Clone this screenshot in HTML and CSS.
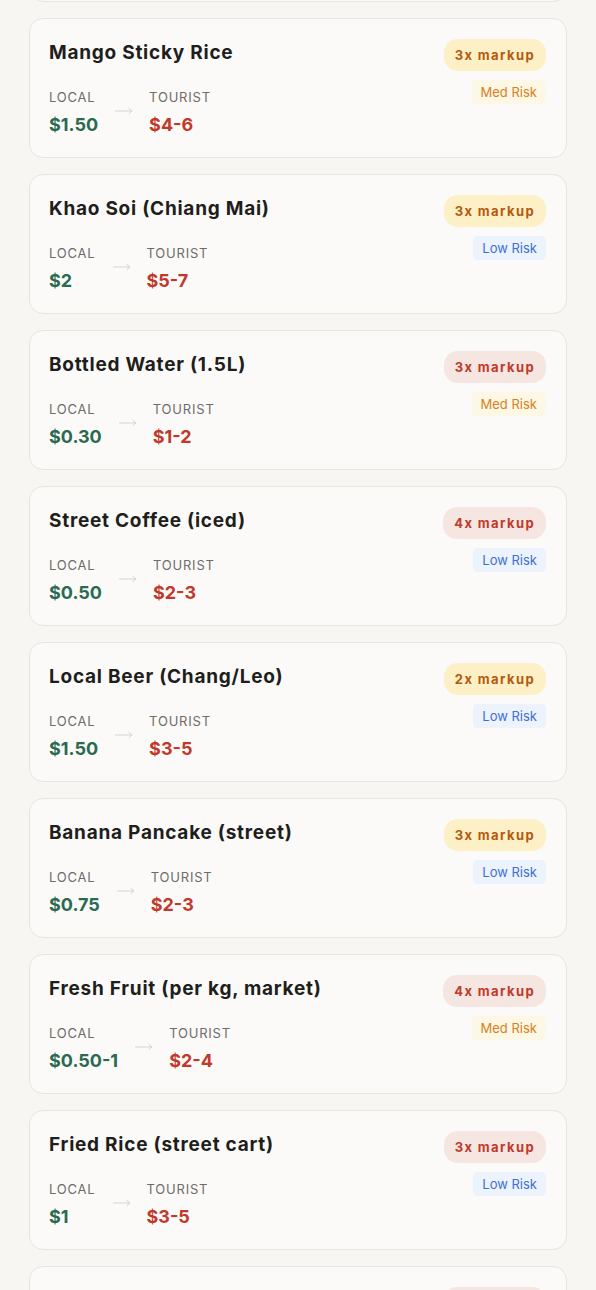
FILE: index.html
```html
<!DOCTYPE html>
<html lang="en">
<head>
    <meta charset="UTF-8">
    <meta name="viewport" content="width=device-width, initial-scale=1.0">
    <title>Thailand Price Check</title>
    <link rel="stylesheet" href="styles.css">
</head>
<body>

    <div class="price-list">

        <!-- card scrolled past, only its bottom edge shows -->
        <div class="item-card item-card--scrolled"></div>

        <div class="item-card">
            <div class="item-main">
                <h2 class="item-name">Mango Sticky Rice</h2>
                <div class="price-row">
                    <div class="price-col">
                        <span class="price-label">LOCAL</span>
                        <span class="price local">$1.50</span>
                    </div>
                    <svg class="arrow" width="18" height="8" viewBox="0 0 18 8"><path d="M0 4H17M13.5 1L17 4L13.5 7" fill="none" stroke="currentColor" stroke-width="1"/></svg>
                    <div class="price-col">
                        <span class="price-label">TOURIST</span>
                        <span class="price tourist">$4-6</span>
                    </div>
                </div>
            </div>
            <div class="item-tags">
                <span class="markup markup--warn">3x markup</span>
                <span class="risk risk--med">Med Risk</span>
            </div>
        </div>

        <div class="item-card">
            <div class="item-main">
                <h2 class="item-name">Khao Soi (Chiang Mai)</h2>
                <div class="price-row">
                    <div class="price-col">
                        <span class="price-label">LOCAL</span>
                        <span class="price local">$2</span>
                    </div>
                    <svg class="arrow" width="18" height="8" viewBox="0 0 18 8"><path d="M0 4H17M13.5 1L17 4L13.5 7" fill="none" stroke="currentColor" stroke-width="1"/></svg>
                    <div class="price-col">
                        <span class="price-label">TOURIST</span>
                        <span class="price tourist">$5-7</span>
                    </div>
                </div>
            </div>
            <div class="item-tags">
                <span class="markup markup--warn">3x markup</span>
                <span class="risk risk--low">Low Risk</span>
            </div>
        </div>

        <div class="item-card">
            <div class="item-main">
                <h2 class="item-name">Bottled Water (1.5L)</h2>
                <div class="price-row">
                    <div class="price-col">
                        <span class="price-label">LOCAL</span>
                        <span class="price local">$0.30</span>
                    </div>
                    <svg class="arrow" width="18" height="8" viewBox="0 0 18 8"><path d="M0 4H17M13.5 1L17 4L13.5 7" fill="none" stroke="currentColor" stroke-width="1"/></svg>
                    <div class="price-col">
                        <span class="price-label">TOURIST</span>
                        <span class="price tourist">$1-2</span>
                    </div>
                </div>
            </div>
            <div class="item-tags">
                <span class="markup markup--high">3x markup</span>
                <span class="risk risk--med">Med Risk</span>
            </div>
        </div>

        <div class="item-card">
            <div class="item-main">
                <h2 class="item-name">Street Coffee (iced)</h2>
                <div class="price-row">
                    <div class="price-col">
                        <span class="price-label">LOCAL</span>
                        <span class="price local">$0.50</span>
                    </div>
                    <svg class="arrow" width="18" height="8" viewBox="0 0 18 8"><path d="M0 4H17M13.5 1L17 4L13.5 7" fill="none" stroke="currentColor" stroke-width="1"/></svg>
                    <div class="price-col">
                        <span class="price-label">TOURIST</span>
                        <span class="price tourist">$2-3</span>
                    </div>
                </div>
            </div>
            <div class="item-tags">
                <span class="markup markup--high">4x markup</span>
                <span class="risk risk--low">Low Risk</span>
            </div>
        </div>

        <div class="item-card">
            <div class="item-main">
                <h2 class="item-name">Local Beer (Chang/Leo)</h2>
                <div class="price-row">
                    <div class="price-col">
                        <span class="price-label">LOCAL</span>
                        <span class="price local">$1.50</span>
                    </div>
                    <svg class="arrow" width="18" height="8" viewBox="0 0 18 8"><path d="M0 4H17M13.5 1L17 4L13.5 7" fill="none" stroke="currentColor" stroke-width="1"/></svg>
                    <div class="price-col">
                        <span class="price-label">TOURIST</span>
                        <span class="price tourist">$3-5</span>
                    </div>
                </div>
            </div>
            <div class="item-tags">
                <span class="markup markup--warn">2x markup</span>
                <span class="risk risk--low">Low Risk</span>
            </div>
        </div>

        <div class="item-card">
            <div class="item-main">
                <h2 class="item-name">Banana Pancake (street)</h2>
                <div class="price-row">
                    <div class="price-col">
                        <span class="price-label">LOCAL</span>
                        <span class="price local">$0.75</span>
                    </div>
                    <svg class="arrow" width="18" height="8" viewBox="0 0 18 8"><path d="M0 4H17M13.5 1L17 4L13.5 7" fill="none" stroke="currentColor" stroke-width="1"/></svg>
                    <div class="price-col">
                        <span class="price-label">TOURIST</span>
                        <span class="price tourist">$2-3</span>
                    </div>
                </div>
            </div>
            <div class="item-tags">
                <span class="markup markup--warn">3x markup</span>
                <span class="risk risk--low">Low Risk</span>
            </div>
        </div>

        <div class="item-card">
            <div class="item-main">
                <h2 class="item-name">Fresh Fruit (per kg, market)</h2>
                <div class="price-row">
                    <div class="price-col">
                        <span class="price-label">LOCAL</span>
                        <span class="price local">$0.50-1</span>
                    </div>
                    <svg class="arrow" width="18" height="8" viewBox="0 0 18 8"><path d="M0 4H17M13.5 1L17 4L13.5 7" fill="none" stroke="currentColor" stroke-width="1"/></svg>
                    <div class="price-col">
                        <span class="price-label">TOURIST</span>
                        <span class="price tourist">$2-4</span>
                    </div>
                </div>
            </div>
            <div class="item-tags">
                <span class="markup markup--high">4x markup</span>
                <span class="risk risk--med">Med Risk</span>
            </div>
        </div>

        <div class="item-card">
            <div class="item-main">
                <h2 class="item-name">Fried Rice (street cart)</h2>
                <div class="price-row">
                    <div class="price-col">
                        <span class="price-label">LOCAL</span>
                        <span class="price local">$1</span>
                    </div>
                    <svg class="arrow" width="18" height="8" viewBox="0 0 18 8"><path d="M0 4H17M13.5 1L17 4L13.5 7" fill="none" stroke="currentColor" stroke-width="1"/></svg>
                    <div class="price-col">
                        <span class="price-label">TOURIST</span>
                        <span class="price tourist">$3-5</span>
                    </div>
                </div>
            </div>
            <div class="item-tags">
                <span class="markup markup--high">3x markup</span>
                <span class="risk risk--low">Low Risk</span>
            </div>
        </div>

        <!-- next card, only its top edge shows -->
        <div class="item-card item-card--peek">
            <div class="item-tags">
                <span class="markup markup--high"></span>
            </div>
        </div>

    </div>

</body>
</html>
```

FILE: styles.css
```css
body {
    margin: 0;
    background: #f7f6f2;
    font-family: 'Inter', 'Liberation Sans', sans-serif;
    color: #1c1c1a;
}

.price-list {
    display: flex;
    flex-direction: column;
    gap: 16px;
    padding: 0 29px 40px;
}

.item-card--scrolled {
    margin-top: -138px;
}

.item-card {
    display: flex;
    justify-content: space-between;
    height: 140px;
    box-sizing: border-box;
    padding: 20px 20px 0 19px;
    background: #fbfaf8;
    border: 1px solid #e8e5df;
    border-radius: 14px;
}

.item-card--peek {
    justify-content: flex-end;
}

.item-card--peek .markup {
    width: 81px;
}

.item-name {
    margin: 0;
    font-size: 19px;
    line-height: 28px;
    font-weight: 700;
    letter-spacing: 0.75px;
    color: #1e1e1c;
}

.price-row {
    display: flex;
    align-items: center;
    margin-top: 22px;
}

.price-col {
    display: flex;
    flex-direction: column;
}

.price-label {
    font-size: 13px;
    line-height: 16px;
    letter-spacing: 0.8px;
    color: #6e6c68;
}

.price {
    margin-top: 8px;
    font-size: 18px;
    line-height: 24px;
    font-weight: 700;
    letter-spacing: 0;
}

.local {
    color: #2b6a50;
}

.tourist {
    color: #c0392b;
}

.arrow {
    margin: 0 16px 0 17px;
    padding-bottom: 4px;
    color: #d6d4cf;
}

.item-tags {
    display: flex;
    flex-direction: column;
    align-items: flex-end;
    gap: 9px;
}

.markup {
    height: 32px;
    line-height: 32px;
    padding: 0 11px;
    border-radius: 14px;
    font-size: 13px;
    font-weight: 700;
    letter-spacing: 1.4px;
}

.markup--warn {
    background: #fdf0c6;
    color: #b45a0e;
}

.markup--high {
    background: #f6e6e1;
    color: #c0392b;
}

.risk {
    height: 24px;
    line-height: 24px;
    padding: 0 9px;
    border-radius: 4px;
    font-size: 13px;
}

.risk--med {
    background: #fdf7e6;
    color: #d98019;
}

.risk--low {
    background: #edf3fd;
    color: #3d6fd4;
}
```
